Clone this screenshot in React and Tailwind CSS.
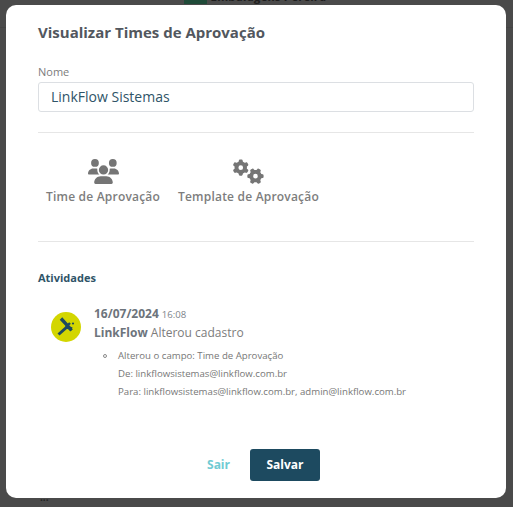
import React from 'react';
import { FaUsers, FaGears } from 'react-icons/fa6';

const font = 'font-["Open_Sans",sans-serif]';

const LinkFlowLogo = () => (
    <svg viewBox="0 0 30 30" className="w-[30px] h-[30px] shrink-0">
        <circle cx="15" cy="15" r="15" fill="#d3d600" />
        <path d="M10 6.5 L16 13 L20.5 18.5" stroke="#1d4a60" strokeWidth="3.4" fill="none" />
        <path d="M7.5 22.5 L16 15 L21 17" stroke="#1d4a60" strokeWidth="3" fill="none" />
        <path d="M15 15 L19 11" stroke="#1d4a60" strokeWidth="2.4" fill="none" />
        <circle cx="22" cy="11.5" r="1.1" fill="#1d4a60" />
    </svg>
);

const TabItem = ({ icon, label }) => (
    <div className="flex flex-col items-center">
        {icon}
        <span className="mt-[4px] text-[12px] leading-[18px] font-semibold text-[#7d7d7d] tracking-[0.2px]">{label}</span>
    </div>
);

export default function App() {
    return (
        <div className={`relative w-[513px] h-[507px] overflow-hidden bg-[#4a4a4a] ${font}`}>
            {/* what shows of the page behind the overlay */}
            <div className="absolute left-[184px] -top-[10px] flex items-center gap-[4px]">
                <div className="w-[23px] h-[14px] bg-[#1f4a38]" />
                <span className="text-[12.3px] leading-[14px] font-bold italic text-[#1e1e1e]">Embalagens Pereira</span>
            </div>
            <div className="absolute left-0 right-0 top-[27px] h-px bg-[#444444]" />
            <div className="absolute left-[40px] top-[493px] text-[#222222] text-[10px] leading-[8px] font-bold">...</div>

            <div className="relative ml-[6px] mt-[5px] w-[500px] h-[493px] rounded-[10px] bg-white px-[32px] flex flex-col">
                <h2 className="mt-[16px] text-[15px] leading-[22px] font-bold text-[#52575e]">Visualizar Times de Aprovação</h2>

                <label className="mt-[21px] text-[11px] leading-[15px] text-[#7c7c7c]">Nome</label>
                <div className="mt-[3px] h-[30px] rounded-[3px] border border-[#dcdfe3] pl-[12px] pb-[2px] flex items-center text-[14px] text-[#2f5468]">
                    LinkFlow Sistemas
                </div>

                <div className="mt-[20px] h-px bg-[#e6e6e6]" />

                <div className="mt-[26px] ml-[8px] flex gap-[18px]">
                    <TabItem icon={<FaUsers className="w-[31px] h-[25px] text-[#757575]" />} label="Time de Aprovação" />
                    <TabItem icon={<FaGears className="w-[31px] h-[25px] text-[#757575]" />} label="Template de Aprovação" />
                </div>

                <div className="mt-[35px] h-px bg-[#e6e6e6]" />

                <h3 className="mt-[28px] text-[11px] leading-[16px] font-bold text-[#2f5468]">Atividades</h3>

                <div className="mt-[17px] ml-[13px] flex">
                    <div className="mt-[9px]">
                        <LinkFlowLogo />
                    </div>
                    <div className="ml-[13px]">
                        <div className="text-[#6d747c] leading-[18px]">
                            <span className="text-[12px] font-bold">16/07/2024</span>
                            <span className="ml-[3px] text-[9.6px] text-[#7d848a]">16:08</span>
                        </div>
                        <div className="text-[12px] leading-[18px] text-[#7c7c7c]">
                            <span className="font-bold text-[#6d747c]">LinkFlow</span> Alterou cadastro
                        </div>
                        <div className="mt-[5px] relative pl-[24px] text-[9.63px] leading-[18px] text-[#777777]">
                            <span className="absolute left-[9px] top-[7px] w-[4px] h-[4px] rounded-full border border-[#8a8a8a]" />
                            <p>Alterou o campo: Time de Aprovação</p>
                            <p>De: linkflowsistemas@linkflow.com.br</p>
                            <p>Para: linkflowsistemas@linkflow.com.br, admin@linkflow.com.br</p>
                        </div>
                    </div>
                </div>

                <div className="mt-auto mb-[17px] flex items-center justify-center gap-[20px] pl-[15px]">
                    <button className="text-[12px] font-bold text-[#6fcbd3]">Sair</button>
                    <button className="w-[70px] h-[32px] rounded-[3px] bg-[#1d4a60] text-[12px] font-bold text-white">Salvar</button>
                </div>
            </div>
        </div>
    );
}
